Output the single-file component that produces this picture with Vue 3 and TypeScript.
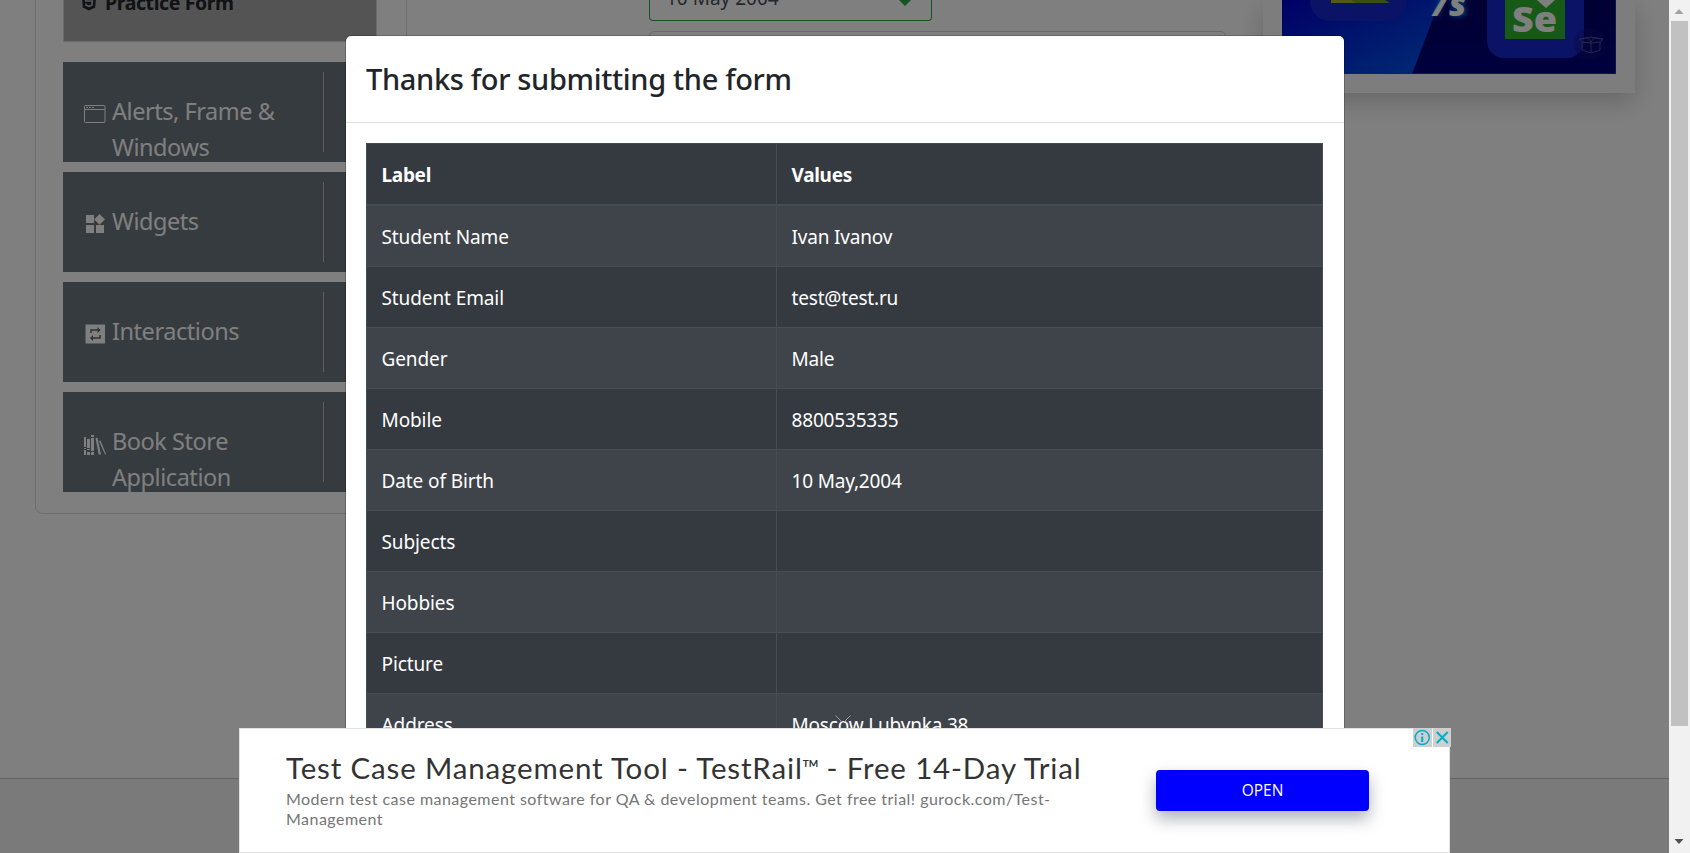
<script setup lang="ts">
interface Row { label: string; value: string }
interface Group { icon: string; lines: string[] }

const rows: Row[] = [
  { label: 'Student Name', value: 'Ivan Ivanov' },
  { label: 'Student Email', value: 'test@test.ru' },
  { label: 'Gender', value: 'Male' },
  { label: 'Mobile', value: '8800535335' },
  { label: 'Date of Birth', value: '10 May,2004' },
  { label: 'Subjects', value: '' },
  { label: 'Hobbies', value: '' },
  { label: 'Picture', value: '' },
  { label: 'Address', value: 'Moscow Lubynka 38' },
]
const groups: Group[] = [
  { icon: 'window', lines: ['Alerts, Frame &', 'Windows'] },
  { icon: 'widgets', lines: ['Widgets'] },
  { icon: 'repeat', lines: ['Interactions'] },
  { icon: 'books', lines: ['Book Store', 'Application'] },
]
</script>

<template>
  <div class="screen">
    <div class="page">
      <div class="columns">
        <aside class="sidebar">
          <div class="active-item">
            <svg class="html-icon" width="16" height="20" viewBox="0 0 16 20"><path d="M.5 0l1.300 16.500L8 19.500l6.200-3L15.500 0z" fill="#212529" /><path d="M12.500 6H4.500l.3 4H11.500l-.6 4.200L8 15.300l-2.900-1.100-.2-1.700" fill="none" stroke="#b0b0b0" stroke-width="1.600" /></svg>
            <span class="active-label">Practice Form</span>
          </div>
          <div v-for="g in groups" :key="g.icon" class="group">
            <svg class="icon" width="24" height="24" viewBox="0 0 24 24">
              <g v-if="g.icon === 'window'" fill="none" stroke="#fff"><rect x="1.500" y="1.500" width="20.500" height="17" rx="1" /><path d="M2 5.500h20" /><path d="M3 3.500h9" stroke-dasharray="2 1" /></g>
              <path v-else-if="g.icon === 'widgets'" fill="#fff" d="M3 11h8v8H3zM13 11h8v8h-8zM3 1h8v8H3zM16.600 0l5.400 5.400-5.400 5.400-5.400-5.400z" />
              <g v-else-if="g.icon === 'repeat'"><path fill="#fff" d="M2.500 .500h19.500v19H2.500z" /><path d="M8 9V6h8M17 11v3H9" fill="none" stroke="#5b666c" stroke-width="1.500" /><path d="M14.500 3l3 3-3 3zM10 11l-3 3 3 3z" fill="#5b666c" /></g>
              <g v-else fill="#fff"><path d="M1 3h2v10H1zM1 14h2v1H1zM1 16h2v5H1zM4 5h3v9H4zM4 15h3v1H4zM4 18h3v3H4zM8 1h3v2H8zM8 4h3v13H8zM8 18h3v3H8z" /><path d="M12.500 4l2-.3L18 20.500h-2.300zM16 7l1.500-.6L23 20l-1 .5z" /></g>
            </svg>
            <div class="group-text"><div v-for="l in g.lines" :key="l">{{ l }}</div></div>
            <span class="divider"></span>
          </div>
        </aside>
        <main class="form">
          <div class="select"><span>10 May 2004</span><svg width="12" height="15" viewBox="0 0 12 15"><path d="M0 9L6 0l6 9-6 6z" fill="#28a745" /></svg></div>
          <div class="textarea"></div>
        </main>
        <aside class="promo">
          <div class="promo-art">
            <svg width="334" height="74" viewBox="0 0 334 74">
              <defs>
                <linearGradient id="blue" x1="0" y1="0" x2="1" y2="1"><stop offset="0" stop-color="#0000cc" /><stop offset="1" stop-color="#0058e8" /></linearGradient>
                <linearGradient id="navy" x1="0" y1="0" x2="0" y2="1"><stop offset="0" stop-color="#000066" /><stop offset="1" stop-color="#00007e" /></linearGradient>
                <filter id="glow" x="-50%" y="-50%" width="200%" height="200%"><feGaussianBlur stdDeviation="2" /></filter>
              </defs>
              <path d="M0 0h334v74H0z" fill="url(#navy)" /><path d="M0 0h158l-28 74H0z" fill="url(#blue)" />
              <rect x="28" y="-50" width="97" height="71" rx="20" fill="#1626cc" />
              <path d="M49 0h54l5 3H49z" fill="#6fa01e" /><path d="M49 0h20l5 3H49z" fill="#a9b428" />
              <path d="M154 15L162-4M183 1q-10-2-11 2t6 4q7 4 0 7l-9-1" fill="none" stroke="#0090f0" stroke-width="5" filter="url(#glow)" />
              <text x="151" y="15.500" class="vs">/</text><text x="167" y="15.500" class="vs">s</text>
              <rect x="205" y="-50" width="97" height="108" rx="17" fill="#1626cc" />
              <path d="M223 0h60v39h-60z" fill="#2fb52f" /><path d="M255 0h18l-9 8z" fill="#fff" />
              <text x="230" y="32" class="se" textLength="45" lengthAdjust="spacingAndGlyphs">Se</text>
              <circle cx="308" cy="44" r="16" fill="#101080" opacity=".4" />
              <g fill="none" stroke="#4c4c95"><path d="M300 42v8l9 3 9-3v-8M309 42v11M300 42l-3-3 9-1 3 4 3-4 9 1-3 3-9 1zM298 39l11-2 11 2" /></g>
              <path d="M0 73.500h334M333.500 0v74" stroke="#234fae" opacity=".6" />
            </svg>
          </div>
        </aside>
      </div>
      <footer></footer>
    </div>
    <div class="backdrop"></div>
    <section class="modal">
      <header><span class="title">Thanks for submitting the form</span></header>
      <div class="body">
        <div class="row head"><div>Label</div><div>Values</div></div>
        <div v-for="r in rows" :key="r.label" class="row"><div>{{ r.label }}</div><div class="value">{{ r.value }}</div></div>
      </div>
    </section>
    <svg class="collapse" width="16" height="10" viewBox="0 0 16 10"><path d="M.5.500L8 8l7.500-7.500" fill="none" stroke="#999" /></svg>
    <section class="banner">
      <div class="copy">
        <div class="headline">Test Case Management Tool - TestRail<sup>TM</sup> - Free 14-Day Trial</div>
        <div class="desc">Modern test case management software for QA &amp; development teams. Get free trial! gurock.com/Test-</div>
        <div class="desc d2">Management</div>
      </div>
      <button class="open">OPEN</button>
      <div class="choices">
        <svg width="18" height="19" viewBox="0 0 18 19"><circle cx="9" cy="9.500" r="7" fill="none" stroke="#00aecd" stroke-width="1.500" /><path d="M9 5v2M9 8.500V14" stroke="#00aecd" stroke-width="2" /></svg>
        <svg width="18" height="19" viewBox="0 0 18 19"><path d="M3.500 4l11 11M14.500 4l-11 11" stroke="#00aecd" stroke-width="2" /></svg>
      </div>
    </section>
    <div class="scrollbar">
      <svg width="21" height="21" viewBox="0 0 21 21"><path d="M5.500 14l4.500-5 4.500 5z" fill="#a3a3a3" /></svg>
      <div class="thumb"></div>
      <svg class="down" width="21" height="21" viewBox="0 0 21 21"><path d="M5.500 7l4.500 5 4.500-5z" fill="#505050" /></svg>
    </div>
  </div>
</template>

<style>
body { margin: 0; overflow: hidden; }
</style>
<style scoped>
* { box-sizing: border-box; }
.screen { position: relative; width: 1690px; height: 853px; overflow: hidden; font-family: "Noto Sans", "Open Sans", sans-serif; color: #212529; }
.page { width: 1669px; height: 853px; display: flex; flex-direction: column; background: #fff; }
.columns { height: 778px; display: flex; align-items: flex-start; padding-left: 35px; }
.sidebar { width: 357px; height: 514px; padding-left: 27px; border: 1px solid #dfdfdf; border-top: 0; border-right: 0; border-radius: 0 0 0 8px; }
.active-item { width: 314px; height: 42px; margin-bottom: 20px; padding-left: 17px; display: flex; background: #a9a9a9; border: 1px solid #d5d5d5; border-top: 0; }
.html-icon { margin-top: -9px; }
.active-label { margin: -12px 0 0 8px; font: 700 19.500px/30px "Noto Sans", sans-serif; letter-spacing: -.4px; white-space: nowrap; }
.group { width: 314px; height: 100px; margin-bottom: 10px; display: flex; background: #6b767c; color: #fff; }
.icon { margin: 42px 0 0 20px; flex: none; }
.group-text { width: 211px; margin: 31px 0 0 5px; font-size: 23.500px; line-height: 36px; letter-spacing: -.45px; flex: none; white-space: nowrap; height: 69px; overflow: hidden; }
.divider { width: 1px; height: 80px; margin-top: 10px; background: #bbb; }
.form { width: 871px; height: 500px; margin-left: 14px; border-left: 1px solid #dfdfdf; padding-left: 242px; }
.select { width: 283px; height: 21px; display: flex; justify-content: space-between; padding: 0 20px 0 16px; border: 1px solid #28a745; border-top: 0; border-radius: 0 0 4px 4px; font-size: 19px; line-height: 20px; color: #495057; }
.select span { margin-top: -12px; }
.select svg { margin-top: -9px; }
.textarea { width: 577px; height: 100px; margin-top: 10px; border: 1px solid #ced4da; border-radius: 5px; }
.promo { width: 372px; height: 93px; margin-left: -14px; padding: 0 19px; background: #fafafa; box-shadow: 0 8px 24px rgba(0,0,0,.2); }
.promo-art { height: 74px; }
.promo-art svg { display: block; }
.vs { font: italic 800 34px "Open Sans", sans-serif; fill: #fff; }
.se { font: 800 36px "Open Sans", sans-serif; fill: #fff; }
footer { height: 75px; border-top: 1px solid #c6c6c6; background: #f5f5f5; }
.backdrop { position: absolute; inset: 0 21px 0 0; background: rgba(0,0,0,.5); }
.modal { position: absolute; left: 345px; top: 35px; width: 1000px; height: 900px; border: 1px solid rgba(0,0,0,.2); border-radius: 6px; background: #fff; background-clip: padding-box; }
.modal header { height: 87px; padding: 22px 20px 0; border-bottom: 1px solid #dee2e6; font-size: 29px; font-weight: 500; line-height: 42px; letter-spacing: -.33px; }
.title { display: inline-block; white-space: nowrap; }
.body { width: 957px; margin: 20px 0 0 20px; border: 1px solid #454d55; border-bottom: 0; }
.row { display: grid; grid-template-columns: 410px 1fr; height: 61px; border-bottom: 1px solid #454d55; color: #fff; font-size: 19px; line-height: 30px; letter-spacing: -.1px; }
.row:nth-child(even) { background: #3f444b; }
.row:nth-child(odd) { background: #353940; }
.row > div { padding: 16px 15px 0 14.500px; white-space: nowrap; }
.row > div:first-child { border-right: 1px solid #454d55; }
.row > .value { letter-spacing: -.18px; }
.row.head { height: 62px; border-bottom-width: 2px; font-weight: 700; letter-spacing: -.3px; }
.collapse { position: absolute; left: 835px; top: 715px; }
.banner { position: absolute; left: 239px; top: 728px; width: 1211px; height: 125px; display: flex; background: #fff; border: 1px solid #e2e2e2; font-family: Lato, sans-serif; }
.copy { width: 869px; padding: 21px 0 0 46px; white-space: nowrap; }
.headline { font-size: 29.500px; line-height: 36px; letter-spacing: .84px; color: #333; }
.headline sup { font-size: 10px; line-height: 0; letter-spacing: 0; vertical-align: 12px; font-weight: 700; }
.desc { font-size: 16px; line-height: 20px; margin-top: 3px; letter-spacing: .47px; color: #757575; }
.d2 { margin-top: 0; }
.open { width: 213px; height: 41px; margin: 41px 0 0 47px; padding: 0 0 2px; border: 0; border-radius: 4px; background: #00f; color: #fff; font: 500 15.500px "Open Sans", sans-serif; box-shadow: 0 8px 16px rgba(30,35,60,.35); }
.choices { position: absolute; right: -2px; top: -1px; display: flex; gap: 1px; }
.choices svg { background: #cfcfcf; width: 18.500px; }
.scrollbar { position: absolute; right: 0; top: 0; width: 21px; height: 853px; background: #f1f1f1; display: flex; flex-direction: column; }
.scrollbar svg { display: block; flex: none; }
.thumb { width: 17px; height: 705px; margin-left: 2px; background: #c1c1c1; }
.down { margin-top: auto; }
</style>
